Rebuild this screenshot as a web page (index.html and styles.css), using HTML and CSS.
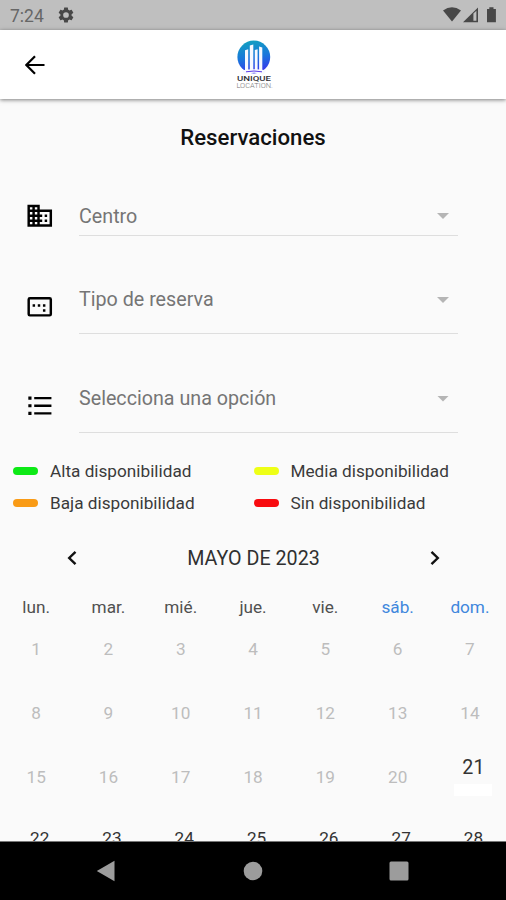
FILE: index.html
```html
<!DOCTYPE html>
<html lang="es">
<head>
<meta charset="utf-8">
<title>Reservaciones</title>
<link rel="stylesheet" href="styles.css">
</head>
<body>
<div class="screen">
  <div class="status">
    <span class="clock">7:24</span>
    <svg class="gear" viewBox="0 0 24 24"><path d="M19.43 12.98c.04-.32.07-.64.07-.98s-.03-.66-.07-.98l2.11-1.65c.19-.15.24-.42.12-.64l-2-3.46c-.12-.22-.39-.3-.61-.22l-2.49 1c-.52-.4-1.08-.73-1.69-.98l-.38-2.65C14.46 2.18 14.25 2 14 2h-4c-.25 0-.46.18-.49.42l-.38 2.65c-.61.25-1.17.59-1.69.98l-2.49-1c-.23-.09-.49 0-.61.22l-2 3.46c-.13.22-.07.49.12.64l2.11 1.65c-.04.32-.07.65-.07.98s.03.66.07.98l-2.11 1.65c-.19.15-.24.42-.12.64l2 3.46c.12.22.39.3.61.22l2.49-1c.52.4 1.08.73 1.69.98l.38 2.65c.03.24.24.42.49.42h4c.25 0 .46-.18.49-.42l.38-2.65c.61-.25 1.17-.59 1.69-.98l2.49 1c.23.09.49 0 .61-.22l2-3.46c.12-.22.07-.49-.12-.64l-2.11-1.65zM12 15.8a3.8 3.8 0 1 1 0-7.6 3.8 3.8 0 0 1 0 7.6z"/></svg>
    <svg class="signals" viewBox="0 0 56 18">
      <path d="M1 4.5Q10-2.2 19 4.5L10 15.5z"/>
      <path fill-rule="evenodd" d="M21 16.3 36 1.5V16.3zM31.4 7.6V14.8H34.4V4.7z"/>
      <path d="M47.3 1.2h4.2v1.9h2.4v13.2H45V3.1h2.3z"/>
    </svg>
  </div>
  <header class="appbar">
    <svg class="back" viewBox="0 0 20 20"><path d="M19.5 10H2M10 1.2 1.3 10 10 18.8"/></svg>
    <svg class="logo" viewBox="0 0 40 52">
      <defs><linearGradient id="disc" x1=".4" y1="0" x2=".6" y2="1"><stop offset="0" stop-color="#129fc0"/><stop offset=".5" stop-color="#1976dc"/><stop offset="1" stop-color="#3930ed"/></linearGradient></defs>
      <circle cx="19.8" cy="17" r="16.4" fill="url(#disc)"/>
      <g fill="#f7f9ff"><path d="M11 10.2l3.2-1v21H11zM15.8 5.6l3.5-1v25.8h-3.5zM20.8 10.1l2.8-.8v21h-2.8zM25.1 6.6l3.2.8V30h-3.2z"/><path d="M8 30.2q12-2 24 0l-2 4q-10-3-20 0z"/></g>
      <path d="M12 31.8q8-1.6 16 0" fill="none" stroke="#5a3be8" stroke-width="1"/>
      <text x="3" y="40.6" textLength="34" lengthAdjust="spacingAndGlyphs" class="brand">UNIQUE</text>
      <text x="2.4" y="47.9" textLength="36.5" lengthAdjust="spacingAndGlyphs" class="sub">LOCATION.</text>
    </svg>
  </header>
  <main class="content">
    <h1>Reservaciones</h1>
    <div class="field first">
      <svg viewBox="0 0 24 24"><path d="M12 7V3H2v18h20V7H12zM6 19H4v-2h2v2zm0-4H4v-2h2v2zm0-4H4V9h2v2zm0-4H4V5h2v2zm4 12H8v-2h2v2zm0-4H8v-2h2v2zm0-4H8V9h2v2zm0-4H8V5h2v2zm10 12h-8v-2h2v-2h-2v-2h2v-2h-2V9h8v10zm-2-8h-2v2h2v-2zm0 4h-2v2h2v-2z"/></svg>
      <div class="select"><span>Centro</span><i class="caret"></i></div>
    </div>
    <div class="field">
      <svg viewBox="0 0 24 24"><path fill-rule="evenodd" d="M4 4h16a2 2 0 0 1 2 2v12a2 2 0 0 1-2 2H4a2 2 0 0 1-2-2V6a2 2 0 0 1 2-2zM4 6v12h16V6zM6.2 10h2v2h-2zM10.4 10h2v2h-2zM14.6 10h2v2h-2zM14.6 14h2v2h-2z"/></svg>
      <div class="select"><span>Tipo de reserva</span><i class="caret"></i></div>
    </div>
    <div class="field">
      <svg viewBox="0 0 24 24"><path d="M2.7 4.5h2.6v2.6H2.7zM2.7 10.7h2.6v2.6H2.7zM2.7 16.9h2.6v2.6H2.7zM7.5 4.8h14v2h-14zM7.5 11h14v2h-14zM7.5 17.2h14v2h-14z"/></svg>
      <div class="select"><span>Selecciona una opción</span><i class="caret"></i></div>
    </div>
    <div class="legend">
      <div><i class="high"></i><span>Alta disponibilidad</span></div>
      <div><i class="medium"></i><span>Media disponibilidad</span></div>
      <div><i class="low"></i><span>Baja disponibilidad</span></div>
      <div><i class="none"></i><span>Sin disponibilidad</span></div>
    </div>
    <div class="month">
      <svg viewBox="0 0 10 16"><path d="M8.5 1.8 2.2 8l6.3 6.2"/></svg>
      <span>MAYO DE 2023</span>
      <svg viewBox="0 0 10 16"><path d="M1.5 1.8 7.8 8l-6.3 6.2"/></svg>
    </div>
    <div class="week names"><span>lun.</span><span>mar.</span><span>mié.</span><span>jue.</span><span>vie.</span><span class="weekend">sáb.</span><span class="weekend">dom.</span></div>
    <div class="week"><span>1</span><span>2</span><span>3</span><span>4</span><span>5</span><span>6</span><span>7</span></div>
    <div class="week"><span>8</span><span>9</span><span>10</span><span>11</span><span>12</span><span>13</span><span>14</span></div>
    <div class="week"><span>15</span><span>16</span><span>17</span><span>18</span><span>19</span><span>20</span><div class="today"><span>21</span><i></i></div></div>
    <div class="week open"><span>22</span><span>23</span><span>24</span><span>25</span><span>26</span><span>27</span><span>28</span></div>
  </main>
  <nav class="navbar">
    <svg viewBox="0 0 20 22"><path d="M18.5.8v20.4L.8 11z"/></svg>
    <svg viewBox="0 0 20 22"><circle cx="10" cy="11" r="9.3"/></svg>
    <svg viewBox="0 0 20 22"><rect x=".5" y="1.5" width="19" height="19" rx="1.5"/></svg>
  </nav>
</div>
</body>
</html>
```

FILE: styles.css
```css
* { box-sizing: border-box; }
body { margin: 0; font-family: Roboto, "Liberation Sans", sans-serif; }
.screen { width: 506px; height: 900px; display: flex; flex-direction: column; overflow: hidden; background: #fafafa; }
.status { flex: none; height: 30px; display: flex; align-items: center; padding: 0 8px 0 10px; background: #bfbfbf; color: #666; }
.clock { width: 47px; font-size: 17.5px; line-height: 30px; padding-top: 1px; }
.gear { width: 18px; height: 18px; fill: #484848; }
.signals { width: 56px; height: 18px; margin-left: auto; fill: #484848; }
.appbar { flex: none; height: 69px; display: grid; grid-template-columns: 1fr 40px 1fr; padding: 0 25px; background: #fff; box-shadow: 0 1px 4px rgba(0,0,0,.5); z-index: 1; }
.back { width: 20px; height: 20px; margin-top: 25px; fill: none; stroke: #000; stroke-width: 2.2; }
.logo { width: 40px; height: 52px; margin: 10px 0 0 1px; }
.brand { font: 500 7.2px Roboto, sans-serif; fill: #303036; }
.sub { font: 300 7px Roboto, sans-serif; fill: #777; }
.content { flex: 1; min-height: 0; overflow: hidden; border-bottom: 1px solid #777; }
h1 { margin: 23px 0 0; height: 30px; line-height: 30px; text-align: center; font-size: 22.2px; font-weight: 500; color: #111; }
.field { display: flex; align-items: flex-start; height: 98.5px; padding-left: 25px; }
.field.first { height: 84px; margin-top: 49px; }
.field svg { flex: none; width: 29.5px; height: 29.5px; margin-top: 7px; }
.field.first svg { margin-top: 0; }
.select { width: 379px; height: 49px; margin-left: 24.5px; border-bottom: 1px solid #dedede; display: flex; justify-content: space-between; padding: 0 9px 0 0; color: #757575; font-size: 19.7px; line-height: 30px; }
.first .select { height: 35px; line-height: 31px; }
.caret { width: 12px; height: 6px; margin-top: 12px; background: #b5b5b5; clip-path: polygon(0 0, 100% 0, 50% 100%); }
.legend { display: grid; grid-template-columns: 240.5px 1fr; grid-auto-rows: 32px; margin-top: -27px; padding-left: 13px; font-size: 17.2px; color: #3a3a3a; }
.legend div { display: flex; align-items: center; gap: 12px; }
.legend i { width: 25px; height: 8px; border-radius: 4px; }
.high { background: #0de916; }
.medium { background: #eeff16; }
.low { background: #f99b16; }
.none { background: #f80b0f; }
.month { display: flex; align-items: center; justify-content: space-between; height: 30px; margin: 24px 66px 0 67px; font-size: 19.7px; color: #303030; }
.month svg { width: 10px; height: 16px; fill: none; stroke: #111; stroke-width: 2.4; }
.week { display: grid; grid-template-columns: repeat(7, 72.3px); height: 64px; line-height: 24px; text-align: center; font-size: 17.2px; color: #bdbdbd; }
.names { height: 42px; margin-top: 22px; color: #505050; }
.weekend { color: #3f87dd; }
.today { display: flex; flex-direction: column; align-items: center; margin: -9px 0 0 7px; font-size: 19.7px; color: #333; }
.today i { width: 38px; height: 12px; margin-top: 4px; background: #fff; }
.open { color: #333; margin-top: -3px; padding-left: 3.5px; }
.navbar { flex: none; height: 58px; display: flex; justify-content: space-between; align-items: center; padding: 0 97px 0 96px; background: #000; }
.navbar svg { width: 20px; height: 22px; fill: #9c9c9c; }
```
